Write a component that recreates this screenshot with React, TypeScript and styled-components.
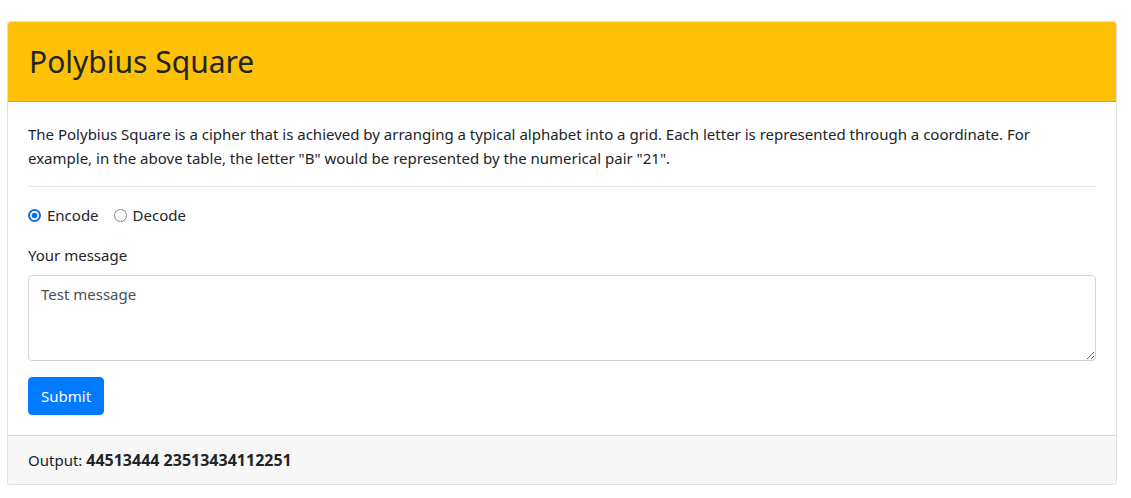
import React, { useState } from "react";
import styled, { createGlobalStyle } from "styled-components";

const Global = createGlobalStyle`
  html, body { margin: 0; padding: 0; background: #fff; }
  body {
    font-family: "Noto Sans", "Segoe UI", Arial, sans-serif;
    font-size: 15px;
    line-height: 24px;
    color: #212529;
  }
  * { box-sizing: border-box; }
`;

const Page = styled.div`
  padding: 21px 14px 0 7px;
`;

const Card = styled.div`
  display: flex;
  flex-direction: column;
  border: 1px solid rgba(0, 0, 0, 0.125);
  border-radius: 4px;
  overflow: hidden;
  background: #fff;
`;

const Header = styled.div`
  background: #ffc107;
  border-bottom: 1px solid rgba(0, 0, 0, 0.125);
  height: 80px;
  padding: 0 20px;
  display: flex;
  align-items: center;
`;

const Title = styled.h1`
  margin: 0 0 0 1px;
  font-size: 30px;
  font-weight: 400;
  line-height: 1.2;
  color: #212529;
`;

const Body = styled.div`
  padding: 20px;
`;

const Intro = styled.p`
  margin: 0 0 16px 0;
`;

const Rule = styled.hr`
  margin: 0 0 16px 0;
  border: 0;
  border-top: 1px solid rgba(0, 0, 0, 0.1);
`;

const RadioRow = styled.div`
  display: flex;
  align-items: center;
  gap: 15px;
  margin-bottom: 16px;
`;

const RadioLabel = styled.label`
  display: inline-flex;
  align-items: center;
  gap: 6px;
`;

const Radio = styled.input`
  appearance: none;
  margin: 0;
  width: 13px;
  height: 13px;
  border-radius: 50%;
  border: 1.5px solid #858585;
  background: #fff;
  &:checked {
    border: 2px solid #0b6fe0;
    background: radial-gradient(circle, #0b6fe0 0 2.6px, #fff 3.1px);
  }
`;

const FieldLabel = styled.label`
  display: block;
  margin-bottom: 8px;
`;

const TextArea = styled.textarea`
  display: block;
  width: 100%;
  height: 86px;
  padding: 6px 12px;
  font: inherit;
  color: #495057;
  border: 1px solid #ced4da;
  border-radius: 4px;
  margin-bottom: 16px;
  resize: vertical;
  outline: none;
`;

const Button = styled.button`
  font: inherit;
  color: #fff;
  background: #007bff;
  border: 1px solid #007bff;
  border-radius: 4px;
  padding: 6px 12px;
  line-height: 24px;
  cursor: pointer;
`;

const Footer = styled.div`
  background: #f7f7f7;
  border-top: 1px solid rgba(0, 0, 0, 0.125);
  padding: 12px 20px;
`;

const Result = styled.b`
  font-size: 16px;
  font-weight: 700;
`;

export default function App() {
  const [mode, setMode] = useState("encode");
  return (
    <Page>
      <Global />
      <Card>
        <Header>
          <Title>Polybius Square</Title>
        </Header>
        <Body>
          <Intro>
            The Polybius Square is a cipher that is achieved by arranging a typical alphabet into a grid. Each letter is
            represented through a coordinate. For example, in the above table, the letter "B" would be represented by the
            numerical pair "21".
          </Intro>
          <Rule />
          <RadioRow>
            <RadioLabel>
              <Radio type="radio" name="mode" checked={mode === "encode"} onChange={() => setMode("encode")} />
              Encode
            </RadioLabel>
            <RadioLabel>
              <Radio type="radio" name="mode" checked={mode === "decode"} onChange={() => setMode("decode")} />
              Decode
            </RadioLabel>
          </RadioRow>
          <FieldLabel htmlFor="msg">Your message</FieldLabel>
          <TextArea id="msg" defaultValue="Test message" />
          <Button type="button">Submit</Button>
        </Body>
        <Footer>
          Output: <Result>44513444 23513434112251</Result>
        </Footer>
      </Card>
    </Page>
  );
}
